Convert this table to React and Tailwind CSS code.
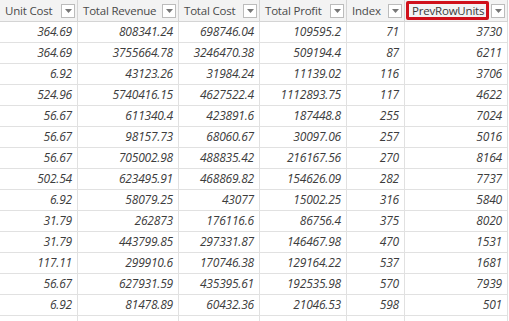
import React from 'react';

const columns = ['Unit Cost', 'Total Revenue', 'Total Cost', 'Total Profit', 'Index', 'PrevRowUnits'];

const rows = [
  ['364.69', '808341.24', '698746.04', '109595.2', '71', '3730'],
  ['364.69', '3755664.78', '3246470.38', '509194.4', '87', '6211'],
  ['6.92', '43123.26', '31984.24', '11139.02', '116', '3706'],
  ['524.96', '5740416.15', '4627522.4', '1112893.75', '117', '4622'],
  ['56.67', '611340.4', '423891.6', '187448.8', '255', '7024'],
  ['56.67', '98157.73', '68060.67', '30097.06', '257', '5016'],
  ['56.67', '705002.98', '488835.42', '216167.56', '270', '8164'],
  ['502.54', '623495.91', '468869.82', '154626.09', '282', '7737'],
  ['6.92', '58079.25', '43077', '15002.25', '316', '5840'],
  ['31.79', '262873', '176116.6', '86756.4', '375', '8020'],
  ['31.79', '443799.85', '297331.87', '146467.98', '470', '1531'],
  ['117.11', '299910.6', '170746.38', '129164.22', '537', '1681'],
  ['56.67', '627931.59', '435395.61', '192535.98', '570', '7939'],
  ['6.92', '81478.89', '60432.36', '21046.53', '598', '501'],
  ['', '', '', '', '', ''],
];

const FilterButton = () => (
  <span className="ml-auto flex h-[14px] w-[14px] shrink-0 items-center justify-center border border-[#bcbcbc] bg-white">
    <svg width="7" height="4" viewBox="0 0 7 4">
      <path d="M0 0h7L3.5 4z" fill="#777" />
    </svg>
  </span>
);

export default function App() {
  return (
    <div className="h-[321px] w-[509px] overflow-hidden bg-white font-['Open_Sans',sans-serif]">
      <div className="grid w-[508px] grid-cols-[78px_101px_81px_87px_58px_103px]">
        {columns.map((col) => (
          <div
            key={col}
            className="flex h-[22px] items-center border-r border-b border-[#d4d4d4] bg-[#f3f3f3] pl-[5px] pr-[2px] text-[11.5px] tracking-[-0.2px] text-[#4a4a4a]"
          >
            {col === 'PrevRowUnits' ? (
              <span className="-ml-[4px] flex h-[19px] w-[83px] items-center rounded-[2px] border-[3px] border-[#d0101a] pl-[3px] text-[#3a3a3a]">
                {col}
              </span>
            ) : (
              <span className="whitespace-nowrap">{col}</span>
            )}
            <FilterButton />
          </div>
        ))}
        {rows.map((row, i) =>
          row.map((cell, j) => (
            <div
              key={`${i}-${j}`}
              className="h-[21px] border-r border-b border-[#e1e1e1] pr-[5px] text-right text-[12px] italic leading-[20px] tracking-[-0.2px] text-[#3c3c3c]"
            >
              {cell}
            </div>
          ))
        )}
      </div>
    </div>
  );
}
